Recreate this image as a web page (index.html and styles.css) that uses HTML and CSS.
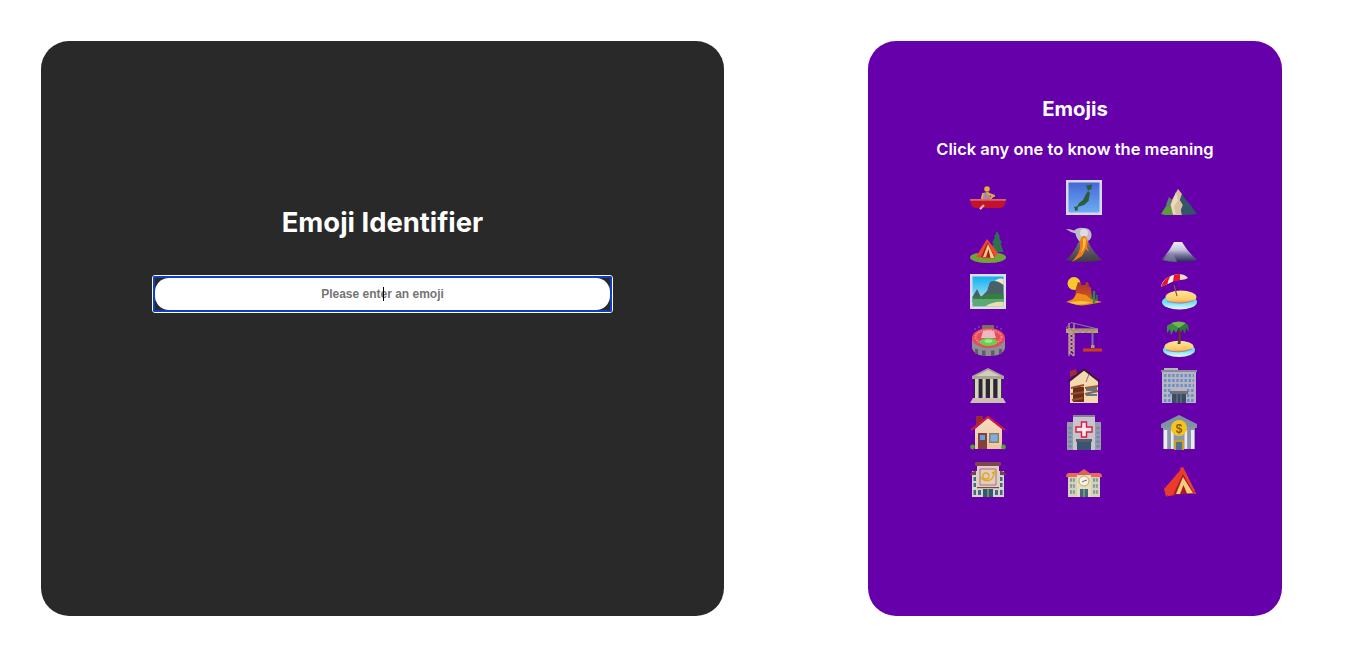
FILE: index.html
```html
<!DOCTYPE html>
<html lang="en">
<head>
<meta charset="utf-8">
<title>Emoji Identifier</title>
<link rel="stylesheet" href="styles.css">
</head>
<body>
<svg class="defs" width="0" height="0" aria-hidden="true">
  <defs>
    <linearGradient id="sky" x1="0" y1="0" x2="0" y2="1"><stop offset="0" stop-color="#4468d6"/><stop offset="1" stop-color="#6cacf4"/></linearGradient>
    <linearGradient id="sky2" x1="0" y1="0" x2="0" y2="1"><stop offset="0" stop-color="#12b0f0"/><stop offset="1" stop-color="#d0f2f4"/></linearGradient>
    <linearGradient id="sea" x1="0" y1="0" x2="0" y2="1"><stop offset="0" stop-color="#38cdea"/><stop offset=".6" stop-color="#7fe4f4"/><stop offset="1" stop-color="#e8fcff"/></linearGradient>
    <linearGradient id="sand" x1="0" y1="0" x2="0" y2="1"><stop offset="0" stop-color="#fee6a0"/><stop offset=".7" stop-color="#fbcc66"/><stop offset="1" stop-color="#ec9c34"/></linearGradient>
    <linearGradient id="rock" x1="0" y1="0" x2="0" y2="1"><stop offset="0" stop-color="#77737c"/><stop offset="1" stop-color="#3e3b44"/></linearGradient>
    <linearGradient id="slate" x1="0" y1="0" x2="0" y2="1"><stop offset="0" stop-color="#f2eff8"/><stop offset=".4" stop-color="#c4c2dc"/><stop offset=".7" stop-color="#6a6a92"/><stop offset="1" stop-color="#28285a"/></linearGradient>
    <linearGradient id="wall" x1="0" y1="0" x2="0" y2="1"><stop offset="0" stop-color="#f6dcc0"/><stop offset="1" stop-color="#eac7a2"/></linearGradient>
    <linearGradient id="desert" x1="0" y1="0" x2="0" y2="1"><stop offset="0" stop-color="#a8342c"/><stop offset="1" stop-color="#d4541e"/></linearGradient>
  </defs>
</svg>
<main class="page">
  <section class="card card-identify">
    <h1 class="title">Emoji Identifier</h1>
    <div class="field">
      <input class="field-input" type="text" placeholder="Please enter an emoji" aria-label="Please enter an emoji">
      <span class="caret"></span>
    </div>
  </section>
  <section class="card card-list">
    <h2 class="list-title">Emojis</h2>
    <h3 class="list-sub">Click any one to know the meaning</h3>
    <div class="grid">
      <svg class="emoji" viewBox="0 0 36 36" role="img" aria-label="rowboat">
        <path d="M10 29 L24 15" stroke="#dcae6c" stroke-width="1.800" fill="none"/>
        <path d="M11 20 Q11 14 14 12.500 L19 12.500 Q21 15 20 20Z" fill="#a88a9c"/>
        <path d="M17 13 L24 16" stroke="#e2aa3c" stroke-width="2" stroke-linecap="round"/>
        <path d="M13 13 L12 19" stroke="#e2b050" stroke-width="1.600"/>
        <circle cx="17" cy="9" r="2.800" fill="#e8ae30"/>
        <path d="M0 19.500 H36 L35 24 Q34 28 29 28 H7 Q2 28 1 24Z" fill="#c4122e"/>
        <path d="M0 19 H36 V20.800 H0Z" fill="#d96a62"/>
        <path d="M10 29 L14 25" stroke="#e4bd84" stroke-width="2.200"/>
      </svg>
      <svg class="emoji" viewBox="0 0 36 36" role="img" aria-label="map of Japan">
        <rect x="0" y="0" width="36" height="35" fill="#d8d8f2"/>
        <rect x="2.500" y="2.500" width="31" height="30" fill="url(#sky)"/>
        <path d="M20 5.500 L26 4.500 L25.500 9 L22 10.500 L21 8Z" fill="#2e5c34"/>
        <path d="M22 11 L24 13 L22.500 21 L18 25 L11 27 L13 23 L17 20 L20 14Z" fill="#2e5c34"/>
        <path d="M13 26 L8 27 L9.500 31 L12 30 L11.500 28Z" fill="#2e5c34"/>
      </svg>
      <svg class="emoji" viewBox="0 0 36 36" role="img" aria-label="mountain">
        <path d="M0 34 L5 25 L8 17 L11 20 L17 9 L24 19 L29 24 L36 34 L24 35 L8 35Z" fill="#34505f"/>
        <path d="M17 9 L21 14 L19 20 L22 25 L20 30 L21 35 L9 35 L7 28 L11 20Z" fill="#d8bf9e"/>
        <path d="M15 12 L17 20 L13 27 L15 34 L9 34 L9 27 L12 20Z" fill="#ecd8bc"/>
        <path d="M21 14 L19 20 L22 25 L20 30 L21 35 L34 34 L29 25 L24 19Z" fill="#34546c"/>
        <path d="M0 34 L6 25 L10 26 L12 35 L4 35Z" fill="#5d9a3e"/>
        <path d="M5 25 L8 17 L11 20 L9 27Z" fill="#5e7c78"/>
      </svg>
      <svg class="emoji" viewBox="0 0 36 36" role="img" aria-label="camping">
        <ellipse cx="18" cy="30.500" rx="18" ry="5.500" fill="#6ea53a"/>
        <path d="M27 4 L30 10 L29 10 L32 16 L30.500 16 L33.500 25 L20.500 25 L23.500 16 L22 16 L25 10 L24 10Z" fill="#2f6f52"/>
        <path d="M17 12 L6 30 L23 32 L28 26Z" fill="#ee4a2e"/>
        <path d="M17.500 15 L25 31 L11 30Z" fill="#a81c24"/>
        <path d="M18 17 L13 30 L16 30 L18.500 22 L20.500 31 L24.500 31Z" fill="#ecd184"/>
      </svg>
      <svg class="emoji" viewBox="0 0 36 36" role="img" aria-label="volcano">
        <path d="M0 2 Q4 1.500 8 3.500 Q12 0 17 1 Q24 0 25.500 7 Q26 12 22 14 L14 15 Q10 11 9.500 6.500 Q4 5 0 2Z" fill="#bdbbc6"/>
        <circle cx="18" cy="6" r="4" fill="#dedce4"/>
        <path d="M13 14 L22 14 Q26 24 36 33 Q18 37 0 33 Q8 26 13 14Z" fill="url(#rock)"/>
        <path d="M14 14 L22 14 L21 20 L23 25 L20 22 L16 29 L6 35 L12 27 L14 21Z" fill="#ee7c1c"/>
        <path d="M15 11 Q18 7 20 10 L22 14 L14 14Z" fill="#f0801c"/>
        <path d="M17 11 L20 12 L19 20 L15 26 L17 19Z" fill="#fbc03c"/>
      </svg>
      <svg class="emoji" viewBox="0 0 36 36" role="img" aria-label="mount fuji">
        <path d="M13 15 L21 15 Q26 24 36 33 Q30 35 18 35 Q6 35 0 33 Q8 25 13 15Z" fill="url(#slate)"/>
        <path d="M2 33 Q6 28 12 26 L16 35 Q8 35 2 33Z" fill="#8c8ca8" opacity=".6"/>
      </svg>
      <svg class="emoji" viewBox="0 0 36 36" role="img" aria-label="national park">
        <rect width="36" height="35" fill="#dcdcf2"/>
        <rect x="2.500" y="2.500" width="31" height="30" fill="url(#sky2)"/>
        <path d="M24 8 Q28 3 33.500 5 V13Z" fill="#f4e8b8"/>
        <path d="M3 22 L7 15 L11 23 L17 17 L20 8 Q26 5 33.500 11 V25 H3Z" fill="#4a6068"/>
        <path d="M2.500 22 Q12 24 18 20 Q26 19 33.500 20 V28 H2.500Z" fill="#34803c"/>
        <path d="M2.500 25 H33.500 V32.500 H2.500Z" fill="#5ca878"/>
        <path d="M15 32.500 Q24 27 33.500 28 V32.500Z" fill="#eadfb0"/>
      </svg>
      <svg class="emoji" viewBox="0 0 36 36" role="img" aria-label="desert">
        <circle cx="8" cy="9.500" r="6.500" fill="#f6c82c"/>
        <path d="M10 14 L12 8 L15 9 L15.500 11 L19 11 L20 8 L22 8 L23 12 L25 14 L26 25 H9Z" fill="url(#desert)"/>
        <path d="M0 28 L7 25 L11 19 L20 21 L25 25 L36 28 L26 30 Q14 33 6 29.500Z" fill="#ef8a1c"/>
        <path d="M3 28.500 Q14 25.500 26 28.500 Q14 32 6 29.500Z" fill="#fbc43c"/>
        <path d="M27 17 H29.200 V30 H27Z" fill="#2f8a3a"/>
        <path d="M25.500 20 V24 H27.500 M31 21 V26 H29" stroke="#2f8a3a" stroke-width="1.400" fill="none"/>
      </svg>
      <svg class="emoji" viewBox="0 0 36 36" role="img" aria-label="beach with umbrella">
        <ellipse cx="18.500" cy="28" rx="17.500" ry="7.500" fill="url(#sea)"/>
        <ellipse cx="20" cy="23" rx="15.500" ry="6.400" fill="url(#sand)"/>
        <path d="M6 27.500 Q20 31 33 26.500" stroke="#8a80d8" stroke-width=".9" fill="none"/>
        <path d="M13 11 L16 22" stroke="#8c5a2c" stroke-width="1.200"/>
        <path d="M0 13 Q1 3 17 0 Q24 0 27 4 Q24 6 19 6 Q12 6 6.500 10Z" fill="#eadfc0"/>
        <path d="M0 13 Q3 4 10 2 Q7 6 6.500 10 Z" fill="#e8152a"/>
        <path d="M6.500 10 Q8 4 10 2 L13 1 L12 7.500Z" fill="#f4f0e6"/>
        <path d="M12 7.500 L13 1 Q16 0 19 0 L19 6Z" fill="#e8152a"/>
      </svg>
      <svg class="emoji" viewBox="0 0 36 36" role="img" aria-label="stadium">
        <rect x="12" y="4" width="12" height="6" rx="1" fill="#77705c"/>
        <circle cx="5" cy="8" r=".8" fill="#3c8cdc"/><circle cx="9" cy="6" r=".8" fill="#3c8cdc"/><circle cx="27" cy="6" r=".8" fill="#3c8cdc"/><circle cx="31" cy="8" r=".8" fill="#3c8cdc"/>
        <path d="M2 17 V27 Q4 35 18.500 35 Q33 35 35 27 V17Z" fill="#8e8e96"/>
        <ellipse cx="18.500" cy="17" rx="16.500" ry="10" fill="#e84a58"/>
        <ellipse cx="18.500" cy="16" rx="13" ry="7" fill="none" stroke="#f08a90" stroke-width="2" stroke-dasharray="1.500 1"/>
        <path d="M13 10 Q18 8.500 24 10 L26 17 L11 17Z" fill="#efb8c0"/>
        <ellipse cx="18.500" cy="21" rx="9" ry="4" fill="#66d050"/>
        <ellipse cx="18.500" cy="20" rx="4" ry="1.800" fill="#a4e890"/>
        <path d="M5 28 H8 V33 H5Z M12 29.500 H15.500 V35 H12Z M21 29.500 H24.500 V35 H21Z M29 28 H32 V33 H29Z" fill="#5c5c64"/>
      </svg>
      <svg class="emoji" viewBox="0 0 36 36" role="img" aria-label="building construction">
        <path d="M3 2 V35 M8 2 V35 M3 7 L8 11 L3 15 L8 19 L3 23 L8 27 L3 31 L8 35 M8 7 L3 11 L8 15 L3 19 L8 23 L3 27 L8 31" stroke="#c0a88c" stroke-width="1.200" fill="none"/>
        <path d="M0 7.500 H32 V12 H0Z" fill="#bca47c"/>
        <path d="M2 9 H31 M5 7.500 L8 12 L11 7.500 L14 12 L17 7.500 L20 12 L23 7.500 L26 12 L29 7.500" stroke="#8f7c58" stroke-width=".6" fill="none"/>
        <path d="M0 7 L5 1.500 L32 8" stroke="#8a7ca0" stroke-width="1" fill="none"/>
        <path d="M26.500 12 V25" stroke="#7a70b4" stroke-width="2"/>
        <path d="M25 24 H28.500 V27 H25Z" fill="#b09a78"/>
        <rect x="17" y="27" width="19" height="4" fill="#c01830"/>
        <rect x="17" y="28.500" width="19" height="1" fill="#9a7050"/>
      </svg>
      <svg class="emoji" viewBox="0 0 36 36" role="img" aria-label="desert island">
        <ellipse cx="18" cy="29" rx="16" ry="7" fill="url(#sea)"/>
        <ellipse cx="18" cy="25.500" rx="14.500" ry="5.800" fill="url(#sand)"/>
        <path d="M5 29 Q17 33 31 28" stroke="#8a80d8" stroke-width=".9" fill="none"/>
        <path d="M16.500 23 Q18.500 15 17 8 L19.500 8 Q20 16 19.500 23Z" fill="#5a3a2c"/>
        <path d="M18 6 Q11 0 6 5 L6 12 L9 8 L10 14 L13 8.500 L15 12Z" fill="#3a9040"/>
        <path d="M18 6 Q24 0 27 4 L28 11 L25 7 L24 13 L21.500 8 L20 12Z" fill="#2f7a3a"/>
        <path d="M10 2 Q18 -1 25 2 L18 7Z" fill="#6cb84c"/>
      </svg>
      <svg class="emoji" viewBox="0 0 36 36" role="img" aria-label="classical building">
        <path d="M18 0 L34 8 V11 H2 V8Z" fill="#a8a498"/>
        <path d="M18 2 L30 8 H6Z" fill="#d2cebc"/>
        <rect x="4" y="11" width="28" height="18" fill="#2c2830"/>
        <rect x="5" y="11" width="3.600" height="19" fill="#d8d2c0"/>
        <rect x="12.500" y="11" width="3.200" height="19" fill="#d8d2c0"/>
        <rect x="20" y="11" width="3.200" height="19" fill="#d8d2c0"/>
        <rect x="27.500" y="11" width="3.600" height="19" fill="#d8d2c0"/>
        <path d="M3 30 H33 L36 35 H0Z" fill="#c8c2ae"/>
      </svg>
      <svg class="emoji" viewBox="0 0 36 36" role="img" aria-label="derelict house">
        <path d="M4 9 L4 3 L10 1 L11 6Z" fill="#a02c3c"/>
        <path d="M4 12 L18 2 L32 12 V35 H4Z" fill="#f4d8b0"/>
        <path d="M2 14 L18 1.500 L34 14" stroke="#3c1c2c" stroke-width="1.800" fill="none"/>
        <path d="M23 6 L20 14" stroke="#5a4a48" stroke-width=".7"/>
        <path d="M7 19 H18 V34 H7Z" fill="#6c2c1c"/>
        <path d="M5 20 L18 17 M5 26 L18 24 M6 32 L17 30" stroke="#93502c" stroke-width="2"/>
        <rect x="20" y="19" width="11" height="9" fill="#5a7a92"/>
        <rect x="20" y="23" width="11" height="3" fill="#c8d8e0"/>
        <path d="M19 20 L32 18 M19 26 L32 23" stroke="#a05c34" stroke-width="2"/>
      </svg>
      <svg class="emoji" viewBox="0 0 36 36" role="img" aria-label="office building">
        <rect x="3" y="0" width="14" height="3" fill="#b4b4be"/>
        <rect x="1" y="2" width="34" height="33" fill="#b6b6c4"/>
        <rect x="0" y="2" width="36" height="2" fill="#8a8a98"/>
        <path d="M3 7.500 H33 M3 12.500 H33 M3 17.500 H33 M3 22.500 H10 M26 22.500 H33 M3 27.500 H10 M26 27.500 H33 M3 32.500 H10 M26 32.500 H33" stroke="#6c90c4" stroke-width="3" stroke-dasharray="2.400 1.700"/>
        <rect x="9" y="23" width="18" height="3" fill="#70707c"/>
        <rect x="11" y="26" width="14" height="9" fill="#3c4c60"/>
        <path d="M16 26 V35 M20 26 V35" stroke="#7c8c9c" stroke-width=".8"/>
      </svg>
      <svg class="emoji" viewBox="0 0 36 36" role="img" aria-label="house">
        <path d="M6 10 V1 H13 V5Z" fill="#962a38"/>
        <path d="M5 14 L18 3 L32 14 V34 H5Z" fill="url(#wall)"/>
        <path d="M1 15 L18 2 L35 15" stroke="#d81e34" stroke-width="2" fill="none"/>
        <rect x="8" y="18" width="9" height="16" fill="#84403c"/>
        <rect x="10" y="20" width="5" height="5" fill="#58a4e0"/>
        <rect x="19" y="18" width="10" height="10" fill="#8c7c70"/>
        <rect x="20.500" y="19.500" width="7" height="7" fill="#7eb2de"/>
        <circle cx="2.500" cy="32" r="2.400" fill="#56a038"/>
        <circle cx="33.500" cy="32" r="2.400" fill="#56a038"/>
      </svg>
      <svg class="emoji" viewBox="0 0 36 36" role="img" aria-label="hospital">
        <rect x="1" y="7" width="34" height="28" fill="#9a9aa8"/>
        <rect x="7" y="0" width="22" height="35" fill="#c6c4cc"/>
        <rect x="7" y="0" width="22" height="2" fill="#84848e"/>
        <path d="M4 12 V34 M32 12 V34" stroke="#6c8cb0" stroke-width="3" stroke-dasharray="2.500 2"/>
        <path d="M15.500 7 H20.500 V12 H26 V17 H20.500 V22 H15.500 V17 H10 V12 H15.500Z" fill="#fbe8ee" stroke="#e01840" stroke-width="1.400"/>
        <rect x="10" y="24" width="16" height="3" fill="#5c5c66"/>
        <rect x="11" y="27" width="14" height="8" fill="#3c5474"/>
      </svg>
      <svg class="emoji" viewBox="0 0 36 36" role="img" aria-label="bank">
        <path d="M18 0 L36 9 V13 H0 V9Z" fill="#7c94a4"/>
        <rect x="2" y="12" width="32" height="22" fill="#8c98a8"/>
        <rect x="3" y="15" width="3.200" height="19" fill="#eceaf0"/>
        <rect x="10" y="15" width="2.600" height="19" fill="#eceaf0"/>
        <rect x="23.500" y="15" width="2.600" height="19" fill="#eceaf0"/>
        <rect x="30" y="15" width="3.200" height="19" fill="#eceaf0"/>
        <rect x="13" y="25" width="10" height="10" fill="#c8a02c"/>
        <rect x="15" y="27" width="6" height="8" fill="#55708c"/>
        <circle cx="18" cy="13" r="8" fill="#f4c51e"/>
        <text class="dollar" x="18" y="17.500" text-anchor="middle">$</text>
      </svg>
      <svg class="emoji" viewBox="0 0 36 36" role="img" aria-label="post office">
        <rect x="5" y="0" width="26" height="4" rx="1.500" fill="#7c4850"/>
        <rect x="2" y="9" width="32" height="26" fill="#dcd4c8"/>
        <path d="M0 13 Q1 9 6 9 V13 H0Z M36 13 Q35 9 30 9 V13 H36Z" fill="#74404c"/>
        <rect x="7" y="4" width="22" height="21" fill="#e6cbc4"/>
        <path d="M10 7 H26 V23 H10Z" fill="none" stroke="#8c6460" stroke-width=".8"/>
        <path d="M11 15 Q14 20 20 18 Q24 16 24 10 M26.500 9 L22 11" stroke="#d8ae1c" stroke-width="1.500" fill="none"/>
        <circle cx="16" cy="14" r="3" fill="none" stroke="#d8ae1c" stroke-width="1.300"/>
        <rect x="7" y="25" width="22" height="1.200" fill="#7c4850"/>
        <rect x="13" y="27" width="10" height="8" fill="#2c5c74"/>
        <path d="M18 27 V35" stroke="#d8b040" stroke-width="1"/>
        <path d="M3.500 15 H6 V19 H3.500Z M3.500 21 H6 V25 H3.500Z M30 15 H32.500 V19 H30Z M30 21 H32.500 V25 H30Z M3.500 28 H6 V33 H3.500Z M30 28 H32.500 V33 H30Z M8 28 H11 V33 H8Z M25 28 H28 V33 H25Z" fill="#3c6c88"/>
      </svg>
      <svg class="emoji" viewBox="0 0 36 36" role="img" aria-label="school">
        <rect x="2" y="14" width="32" height="21" fill="#d8d2b4"/>
        <path d="M0 15 Q0 11 3 11 H33 Q36 11 36 15Z" fill="#e8685c"/>
        <path d="M11 12 L18 7 L25 12 V14 H11Z" fill="#e06058"/>
        <rect x="11" y="13" width="14" height="22" fill="#e4dec4"/>
        <circle cx="18" cy="19" r="5" fill="#f6f4ea" stroke="#c8a84c" stroke-width="1"/>
        <path d="M18 19 L21 18 M18 19 L16 20" stroke="#445" stroke-width=".8"/>
        <rect x="14" y="27" width="8" height="8" fill="#3c6c80"/>
        <path d="M18 27 V35" stroke="#d8b040" stroke-width="1"/>
        <path d="M4 18 H9 M4 24 H9 M4 30 H9 M27 18 H32 M27 24 H32 M27 30 H32" stroke="#7c9ca8" stroke-width="3.600" stroke-dasharray="2 .8"/>
      </svg>
      <svg class="emoji" viewBox="0 0 36 36" role="img" aria-label="tent">
        <path d="M19 6 L22 5 L34 29 L35 32 L24 31Z" fill="#f04030"/>
        <path d="M22 5 L3 27 L5 34.500 L14 33 L24 18Z" fill="#ea3c2c"/>
        <path d="M22 12 L33 31 L12 33Z" fill="#b01820"/>
        <path d="M22 15 L15 32 L19 32 L22.500 23 L26 31.500 L32 31Z" fill="#ecd080"/>
        <path d="M0 23 L3 26 M5 35 L7 33 M36 31 L33 29" stroke="#8a2a20" stroke-width=".8"/>
      </svg>
    </div>
  </section>
</main>
</body>
</html>
```
FILE: styles.css
```css
* { box-sizing: border-box; }
html, body { margin: 0; padding: 0; background: #fff; }
body { font-family: Inter, "Liberation Sans", sans-serif; height: 659px; overflow: hidden; }
.defs { display: block; }
.page { display: flex; gap: 144px; padding: 41px 0 0 41px; }
.card { height: 575px; border-radius: 28px; display: flex; flex-direction: column; align-items: center; color: #fff; }
.card-identify { width: 683px; background: #292929; padding-top: 163px; }
.card-list { width: 414px; background: #6600aa; padding-top: 55px; }
.title { margin: 0; font-size: 27.4px; line-height: 36px; font-weight: 700; }
.field { position: relative; margin-top: 35px; width: 461px; height: 38px; padding: 2px; border: 1px solid #fff; border-radius: 3px; background: #292929; }
.field::after { content: ""; position: absolute; inset: 0; border: 2px solid #0b40c8; border-radius: 2px; pointer-events: none; }
.field-input { display: block; width: 100%; height: 100%; padding: 0; border: 0; border-radius: 14px; outline: none; background: #fff; text-align: center; font: 700 12px "Liberation Sans", sans-serif; color: #111; }
.field-input::placeholder { color: #757575; opacity: 1; }
.caret { position: absolute; left: 230px; top: 11px; width: 1px; height: 14px; background: #000; }
.list-title { margin: 0; font-size: 20.300px; line-height: 26px; font-weight: 700; }
.list-sub { margin: 15px 0 0; font-size: 16.500px; line-height: 24px; font-weight: 600; }
.grid { display: grid; grid-template-columns: repeat(3, 36px); column-gap: 59.5px; row-gap: 11px; margin: 19px 0 0 17px; }
.emoji { display: block; width: 36px; height: 36px; filter: blur(0.3px); }
.dollar { font: 700 12px "Liberation Sans", sans-serif; fill: #8a5a1c; }
```
